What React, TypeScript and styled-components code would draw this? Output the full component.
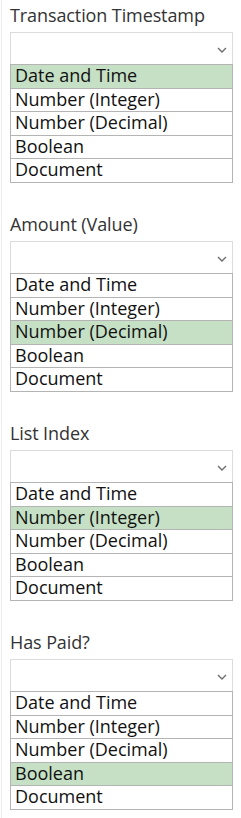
import React from 'react'
import styled, { createGlobalStyle } from 'styled-components'

const GlobalStyle = createGlobalStyle`
  html, body {
    margin: 0;
    padding: 0;
    background: #fff;
  }
  body {
    font-family: "Open Sans", "Noto Sans", sans-serif;
  }
`

const Page = styled.div`
  display: flex;
  flex-direction: column;
  gap: 26px;
  width: 240px;
  min-height: 818px;
  box-sizing: border-box;
  margin-left: 1px;
  padding: 0 8px 0 8px;
  border-left: 1px solid #ececec;
`

const Field = styled.section`
  display: flex;
  flex-direction: column;
`

const Title = styled.div`
  height: 32px;
  font-size: 18px;
  line-height: 30px;
  letter-spacing: -0.1px;
  color: #333;
  white-space: nowrap;
`

const Dropdown = styled.div`
  display: flex;
  align-items: center;
  justify-content: flex-end;
  height: 32px;
  box-sizing: border-box;
  padding: 3px 5px 0 0;
  border: 1px solid #dcdcdc;
  border-bottom: none;
  background: #fff;
`

const Chevron = styled.svg`
  width: 10px;
  height: 6px;
  color: #6e6e6e;
`

const OptionList = styled.ul`
  list-style: none;
  margin: 0;
  padding: 0;
  border-top: 1px solid #b4b4b4;
`

type IOption = { isSelected: boolean }
const Option = styled.li<IOption>`
  height: 22.6px;
  padding-left: 4px;
  border: 1px solid #b4b4b4;
  border-top: none;
  font-size: 18px;
  line-height: 21px;
  color: #111;
  white-space: nowrap;
  background: ${p => (p.isSelected ? '#c5e0c5' : '#fff')};
`

const types = ['Date and Time', 'Number (Integer)', 'Number (Decimal)', 'Boolean', 'Document']

const fields = [
  { label: 'Transaction Timestamp', value: 'Date and Time' },
  { label: 'Amount (Value)', value: 'Number (Decimal)' },
  { label: 'List Index', value: 'Number (Integer)' },
  { label: 'Has Paid?', value: 'Boolean' },
]

const App: React.FC = () => {
  return (
    <>
      <GlobalStyle />
      <Page>
        {fields.map(field => (
          <Field key={field.label}>
            <Title>{field.label}</Title>
            <Dropdown>
              <Chevron viewBox="0 0 10 6" fill="none">
                <path d="M1 1l4 4 4-4" stroke="currentColor" strokeWidth="1.4" />
              </Chevron>
            </Dropdown>
            <OptionList>
              {types.map(type => (
                <Option key={type} isSelected={type === field.value}>
                  {type}
                </Option>
              ))}
            </OptionList>
          </Field>
        ))}
      </Page>
    </>
  )
}

export default App
